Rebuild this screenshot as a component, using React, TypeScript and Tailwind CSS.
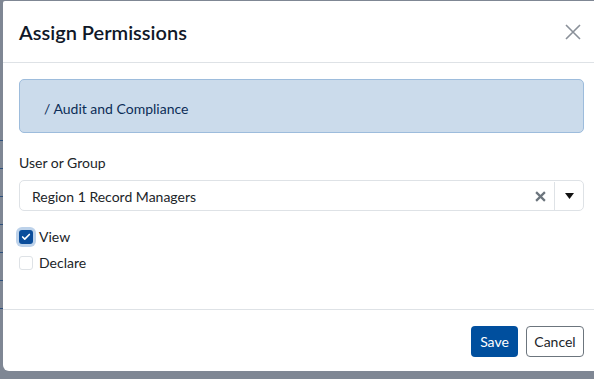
import { Check } from 'lucide-react';

export default function App() {
  return (
    <div className="relative h-[379px] w-[594px] overflow-hidden bg-[#7f8794] font-['Lato',sans-serif] text-[#212529]">
      {/* underlying page strip */}
      <div className="absolute left-0 top-0 flex h-full w-[3px] flex-col gap-[27px] pt-[140px]">
        <div className="h-px w-full bg-[#2d4f7c]" />
        <div className="h-px w-full bg-[#2d4f7c]" />
        <div className="h-px w-full bg-[#2d4f7c]" />
        <div className="h-px w-full bg-[#2d4f7c]" />
        <div className="h-px w-full bg-[#2d4f7c]" />
        <div className="h-px w-full bg-[#2d4f7c]" />
        <div className="h-px w-full bg-[#2d4f7c]" />
      </div>

      <div className="ml-[3px] mt-px flex h-[370px] w-[597px] flex-col rounded-b-[6px] rounded-tl-[2px] bg-white">
        {/* header */}
        <div className="flex h-[62px] items-center justify-between border-b border-[#dee2e6] px-4 pt-px">
          <h2 className="text-[20px] font-semibold leading-[30px] text-[#101828]">Assign Permissions</h2>
          <button type="button" className="mr-[-1px] flex h-6 w-6 items-center justify-center text-[#8a9099]">
            <svg width="16" height="16" viewBox="0 0 16 16" fill="none" stroke="currentColor" strokeWidth="1.6">
              <path d="M1 1 L15 15 M15 1 L1 15" />
            </svg>
          </button>
        </div>

        {/* body */}
        <div className="flex flex-1 flex-col px-4 pt-4">
          <div className="flex h-[54px] items-center rounded-[5px] border border-[#9dbcdc] bg-[#cbdbeb] px-6 pt-[4px] text-[14px] text-[#0b2d57]">
            / Audit and Compliance
          </div>

          <label className="mt-[19px] text-[14px] leading-[21px]">User or Group</label>

          <div className="mt-[7px] flex h-[31px] items-center rounded-[5px] border border-[#dee2e6] pt-px text-[14px]">
            <span className="flex-1 pl-3">Region 1 Record Managers</span>
            <span className="flex w-[28px] items-center justify-center text-[#6c757d]">
              <svg width="11" height="11" viewBox="0 0 10 10" stroke="currentColor" strokeWidth="2">
                <path d="M1 1 L9 9 M9 1 L1 9" />
              </svg>
            </span>
            <span className="flex h-full w-[29px] items-center justify-center border-l border-[#dee2e6]">
              <svg width="9" height="6" viewBox="0 0 9 6" fill="#111">
                <path d="M0 0 H9 L4.5 6 Z" />
              </svg>
            </span>
          </div>

          <div className="mt-[16px] flex items-center gap-[6px] text-[14px] leading-[20px]">
            <span className="flex h-[14px] w-[14px] items-center justify-center rounded-[3px] bg-[#0a4d9b] shadow-[0_0_0_3px_#bdd2ea]">
              <Check className="h-[10px] w-[10px] text-white" strokeWidth={4} />
            </span>
            <span>View</span>
          </div>
          <div className="mt-[6px] flex items-center gap-[6px] text-[14px] leading-[20px]">
            <span className="h-[14px] w-[14px] rounded-[3px] border border-[#dee2e6] bg-white" />
            <span>Declare</span>
          </div>
        </div>

        {/* footer */}
        <div className="flex h-[62px] items-start justify-end gap-2 border-t border-[#dee2e6] px-4 pt-4">
          <button type="button" className="h-[31px] w-[47px] rounded-[4px] bg-[#004f9e] text-[14px] text-white">
            Save
          </button>
          <button type="button" className="h-[31px] w-[58px] rounded-[4px] border border-[#6c757d] bg-white text-[14px] text-[#212529]">
            Cancel
          </button>
        </div>
      </div>
    </div>
  );
}
